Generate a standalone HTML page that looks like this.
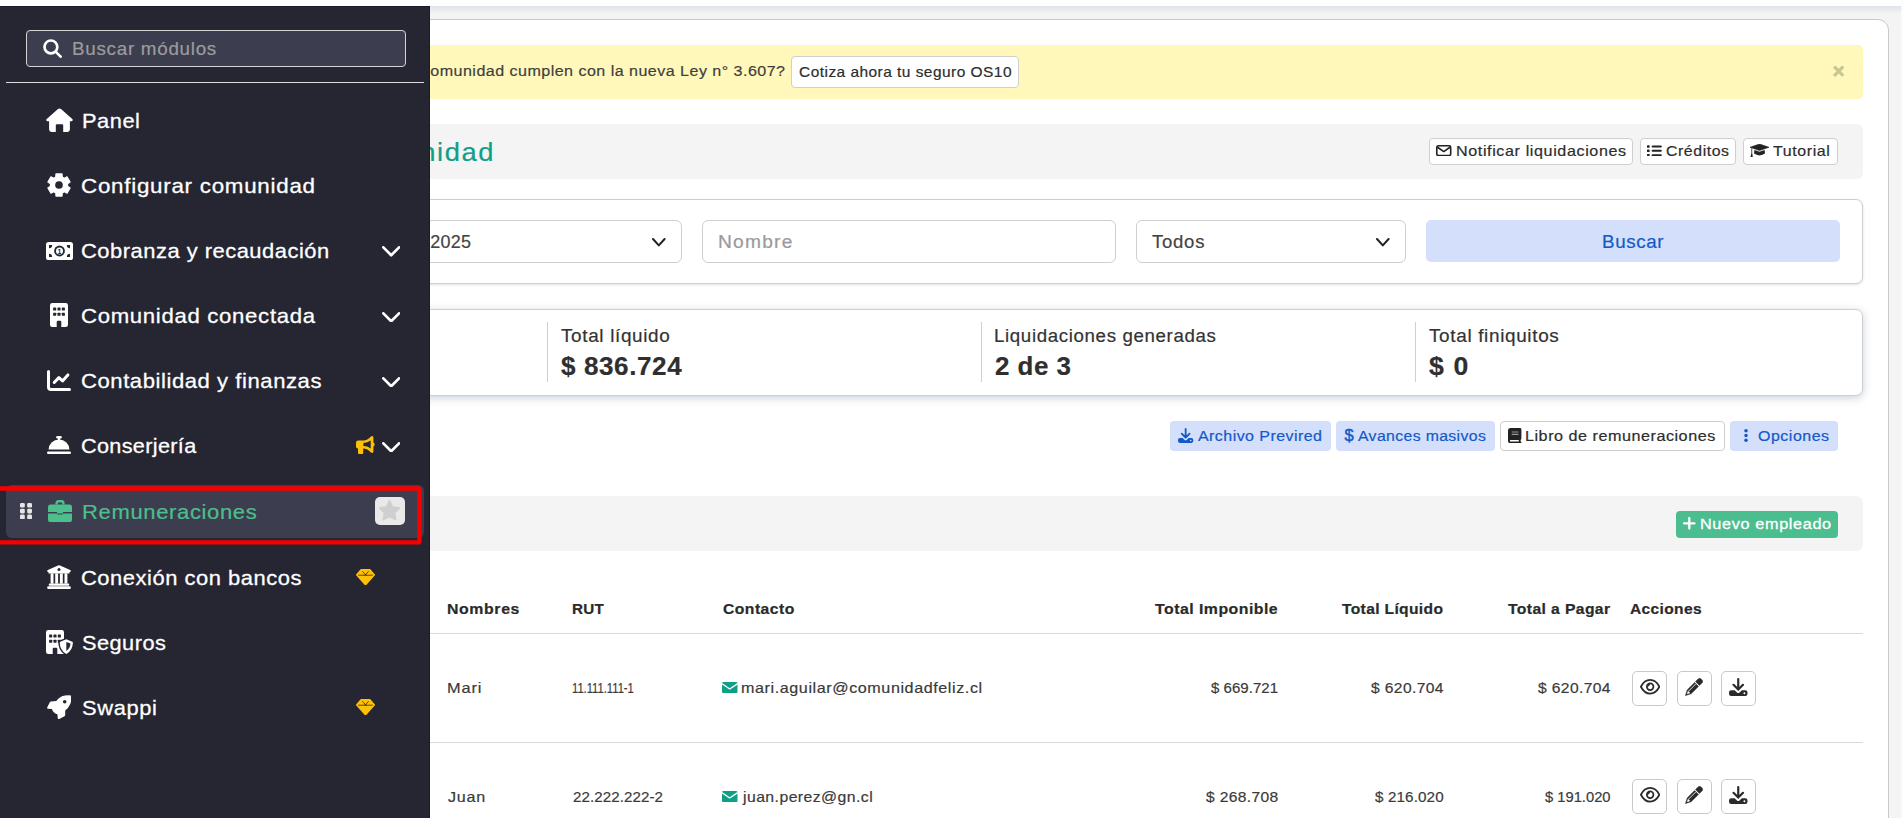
<!DOCTYPE html>
<html lang="es">
<head>
<meta charset="utf-8">
<title>Remuneraciones</title>
<style>
*{box-sizing:border-box;margin:0;padding:0}
html,body{width:1903px;height:818px;overflow:hidden}
body{position:relative;background:#f4f4f4;font-family:"Liberation Sans",sans-serif;color:#333}
.abs,.t,.ic{position:absolute}
.t{white-space:nowrap;line-height:1;-webkit-text-stroke:.2px}
svg{display:block;position:absolute}
/* top */
#topwhite{left:0;top:0;width:1903px;height:6px;background:#fff}
#topshadow{left:430px;top:6px;width:1471px;height:8px;background:linear-gradient(#dfe3e8,#f4f4f4)}
#rightstrip{left:1901px;top:0;width:2px;height:818px;background:#fbfbfb}
#card{left:380px;top:19px;width:1509px;height:820px;background:#fff;border:1px solid #c9c9c9;border-radius:0 11px 0 0}
/* sidebar */
#side{left:0;top:6px;width:430px;height:812px;background:#262633;border-top:1px solid #1b1b27;border-right:1px solid #1b1b27}
</style>
</head>
<body>
<div class="abs" id="topwhite"></div>
<div class="abs" id="topshadow"></div>
<div class="abs" id="rightstrip"></div>
<div class="abs" id="card"></div>
<main class="abs" style="left:0;top:0">
<div class="abs" style="left:380px;top:45px;width:1483px;height:54px;background:#fff8ba;border-radius:5px"></div>
<span class="t" style="left:265.9px;top:63px;font-size:15.2px;color:#3f3f3f;letter-spacing:0.44px;transform:scaleX(1.058);transform-origin:0 50%;">¿Los guardias de tu comunidad cumplen con la nueva Ley n° 3.607?</span>
<div class="abs" style="left:791px;top:56px;width:228px;height:32px;background:#fff;border:1px solid #cfcfcf;border-radius:4px"></div>
<span class="t" style="left:798.8px;top:65px;font-size:14.6px;color:#2d2d2d;letter-spacing:0.44px;transform:scaleX(1.060);transform-origin:0 50%;">Cotiza ahora tu seguro OS10</span>
<span class="t" style="left:1832.8px;top:61px;font-size:20px;font-weight:700;color:#c9c592;-webkit-text-stroke:.8px #c9c592;">×</span>
<div class="abs" style="left:380px;top:124px;width:1483px;height:55px;background:#f4f4f4;border-radius:6px"></div>
<span class="t" style="left:104.3px;top:140px;font-size:25px;color:#0e9f87;letter-spacing:1.41px;transform:scaleX(1.093);transform-origin:0 50%;">Remuneraciones Comunidad</span>
<div class="abs" style="left:1429px;top:138px;width:204px;height:27px;background:#fff;border:1px solid #cfcfcf;border-radius:4px"></div>
<svg style="left:1436.2px;top:145.1px" width="15.5" height="11.3" viewBox="0 0 15.5 11.3"><rect x=".8" y=".8" width="13.9" height="9.700000000000001" rx="1.6" fill="none" stroke="#222" stroke-width="1.6"/><path d="M1.2 2 L7.75 6.554 L14.3 2" fill="none" stroke="#222" stroke-width="1.6" stroke-linejoin="round"/></svg>
<span class="t" style="left:1456.1px;top:144px;font-size:14.8px;color:#2d2d2d;letter-spacing:0.57px;transform:scaleX(1.087);transform-origin:0 50%;">Notificar liquidaciones</span>
<div class="abs" style="left:1640px;top:138px;width:96px;height:27px;background:#fff;border:1px solid #cfcfcf;border-radius:4px"></div>
<svg style="left:1647.3px;top:144.7px" width="14.8" height="11.6" viewBox="0 0 14.8 11.6"><rect x="0" y="0.2" width="2.6" height="2.5" rx=".5" fill="#222"/><rect x="4.6" y="0.45" width="10.2" height="2" rx="1" fill="#222"/><rect x="0" y="4.6" width="2.6" height="2.5" rx=".5" fill="#222"/><rect x="4.6" y="4.85" width="10.2" height="2" rx="1" fill="#222"/><rect x="0" y="9.0" width="2.6" height="2.5" rx=".5" fill="#222"/><rect x="4.6" y="9.25" width="10.2" height="2" rx="1" fill="#222"/></svg>
<span class="t" style="left:1666.1px;top:144px;font-size:14.8px;color:#2d2d2d;letter-spacing:0.55px;transform:scaleX(1.069);transform-origin:0 50%;">Créditos</span>
<div class="abs" style="left:1743px;top:138px;width:95px;height:27px;background:#fff;border:1px solid #cfcfcf;border-radius:4px"></div>
<svg style="left:1749.5px;top:144.2px" width="19" height="13.2" viewBox="0 0 19 13.2"><path d="M9.5 0 L19 3.3 L9.5 6.6 L0 3.3Z" fill="#222" stroke="#222" stroke-width=".6" stroke-linejoin="round"/><path d="M4.4 5.9 L9.5 7.7 L14.6 5.9 L15 9.6 Q12.6 11.4 9.5 11.4 Q6.4 11.4 4 9.6Z" fill="#222"/><path d="M1.4 4 L1.4 9.2 L.4 13 L2.8 13 L2.2 9.2 L2.2 4.4Z" fill="#222"/></svg>
<span class="t" style="left:1773.2px;top:144px;font-size:14.8px;color:#2d2d2d;letter-spacing:0.55px;transform:scaleX(1.079);transform-origin:0 50%;">Tutorial</span>
<div class="abs" style="left:380px;top:199px;width:1483px;height:85px;background:#fff;border:1px solid #cfcfcf;border-radius:7px;box-shadow:0 1px 3px rgba(0,0,0,.12)"></div>
<div class="abs" style="left:380px;top:220px;width:302px;height:43px;background:#fff;border:1px solid #cfcfcf;border-radius:6px"></div>
<span class="t" style="left:330.3px;top:234px;font-size:17.5px;color:#444;letter-spacing:0.31px;transform:scaleX(1.025);transform-origin:0 50%;">Septiembre 2025</span>
<svg style="left:652.3px;top:238.2px" width="13.6" height="8.4" viewBox="0 0 13.6 8.4"><path d="M1.0 1.0 L6.8 7.4 L12.6 1.0" fill="none" stroke="#222" stroke-width="2" stroke-linecap="round" stroke-linejoin="round"/></svg>
<div class="abs" style="left:702px;top:220px;width:414px;height:43px;background:#fff;border:1px solid #cfcfcf;border-radius:6px"></div>
<span class="t" style="left:717.9px;top:234px;font-size:17.5px;color:#9a9a9a;letter-spacing:1.14px;transform:scaleX(1.095);transform-origin:0 50%;">Nombre</span>
<div class="abs" style="left:1136px;top:220px;width:270px;height:43px;background:#fff;border:1px solid #cfcfcf;border-radius:6px"></div>
<span class="t" style="left:1152.2px;top:234px;font-size:17.5px;color:#444;letter-spacing:0.7px;transform:scaleX(1.059);transform-origin:0 50%;">Todos</span>
<svg style="left:1376px;top:238.2px" width="13.6" height="8.4" viewBox="0 0 13.6 8.4"><path d="M1.0 1.0 L6.8 7.4 L12.6 1.0" fill="none" stroke="#222" stroke-width="2" stroke-linecap="round" stroke-linejoin="round"/></svg>
<div class="abs" style="left:1426px;top:220px;width:414px;height:42px;background:#d3dffb;border-radius:5px"></div>
<span class="t" style="left:1602.1px;top:234px;font-size:17.8px;color:#1459c8;letter-spacing:0.59px;transform:scaleX(1.055);transform-origin:0 50%;">Buscar</span>
<div class="abs" style="left:100px;top:309px;width:1763px;height:87px;background:#fff;border:1px solid #cfcfcf;border-radius:7px;box-shadow:0 2px 9px rgba(70,90,120,.28)"></div>
<div class="abs" style="left:547px;top:322px;width:1px;height:60px;background:#cfcfcf"></div>
<div class="abs" style="left:981px;top:322px;width:1px;height:60px;background:#cfcfcf"></div>
<div class="abs" style="left:1415px;top:322px;width:1px;height:60px;background:#cfcfcf"></div>
<span class="t" style="left:561.4px;top:328px;font-size:17.5px;letter-spacing:0.61px;transform:scaleX(1.080);transform-origin:0 50%;">Total líquido</span>
<span class="t" style="left:561.4px;top:354px;font-size:25px;font-weight:700;color:#2f2f2f;letter-spacing:0.57px;transform:scaleX(1.042);transform-origin:0 50%;">$ 836.724</span>
<span class="t" style="left:994.3px;top:328px;font-size:17.5px;letter-spacing:0.6px;transform:scaleX(1.068);transform-origin:0 50%;">Liquidaciones generadas</span>
<span class="t" style="left:995.4px;top:354px;font-size:25px;font-weight:700;color:#2f2f2f;letter-spacing:0.49px;transform:scaleX(1.036);transform-origin:0 50%;">2 de 3</span>
<span class="t" style="left:1429.4px;top:328px;font-size:17.5px;letter-spacing:0.61px;transform:scaleX(1.081);transform-origin:0 50%;">Total finiquitos</span>
<span class="t" style="left:1429.4px;top:354px;font-size:25px;font-weight:700;color:#2f2f2f;letter-spacing:1.1px;transform:scaleX(1.065);transform-origin:0 50%;">$ 0</span>
<div class="abs" style="left:1170px;top:421px;width:161px;height:30px;background:#d3dffb;border-radius:4px"></div>
<svg style="left:1178.4px;top:428px" width="15.3" height="14.886486486486488" viewBox="0 0 18.5 18"><path d="M9.25 1.1 L9.25 11.2 M4.5 6.8 L9.25 11.6 L14 6.8" fill="none" stroke="#1459c8" stroke-width="2.2" stroke-linecap="round" stroke-linejoin="round"/><path d="M2.2 12.2 L5.6 12.2 L8 14.6 Q9.25 15.6 10.5 14.6 L12.9 12.2 L16.3 12.2 Q18.5 12.2 18.5 14.4 L18.5 15.8 Q18.5 18 16.3 18 L2.2 18 Q0 18 0 15.8 L0 14.4 Q0 12.2 2.2 12.2Z" fill="#1459c8"/><circle cx="15.4" cy="15.2" r=".95" fill="#d3dffb"/></svg>
<span class="t" style="left:1198.0px;top:428px;font-size:15.2px;color:#1459c8;letter-spacing:0.41px;transform:scaleX(1.054);transform-origin:0 50%;">Archivo Previred</span>
<div class="abs" style="left:1336px;top:421px;width:159px;height:30px;background:#d3dffb;border-radius:4px"></div>
<span class="t" style="left:1344.6px;top:427px;font-size:16.5px;color:#1459c8;-webkit-text-stroke:.45px;">$</span>
<span class="t" style="left:1358.2px;top:428px;font-size:15.2px;color:#1459c8;letter-spacing:0.35px;transform:scaleX(1.041);transform-origin:0 50%;">Avances masivos</span>
<div class="abs" style="left:1500px;top:421px;width:225px;height:30px;background:#fff;border:1px solid #cfcfcf;border-radius:4px"></div>
<svg style="left:1508.4px;top:427.8px" width="13.4" height="15.3" viewBox="0 0 13.4 15.3"><path d="M2.6 0 L12 0 Q13.4 0 13.4 1.4 L13.4 10.6 Q13.4 11.6 12.6 11.9 L12.6 13.6 Q13.4 13.7 13.4 14.5 Q13.4 15.3 12.5 15.3 L2.6 15.3 Q0 15.3 0 12.7 L0 2.6 Q0 0 2.6 0Z" fill="#222"/><rect x="1.9" y="12" width="9" height="1.6" rx=".6" fill="#fff"/><rect x="3.6" y="3.4" width="7" height="1.1" rx=".5" fill="#999"/><rect x="3.6" y="5.8" width="7" height="1.1" rx=".5" fill="#999"/></svg>
<span class="t" style="left:1525.0px;top:428px;font-size:15.2px;color:#2d2d2d;letter-spacing:0.49px;transform:scaleX(1.064);transform-origin:0 50%;">Libro de remuneraciones</span>
<div class="abs" style="left:1730px;top:421px;width:108px;height:30px;background:#d3dffb;border-radius:4px"></div>
<svg style="left:1743.6px;top:428.9px" width="4" height="13" viewBox="0 0 4 13"><circle cx="2" cy="1.8" r="1.75" fill="#1459c8"/><circle cx="2" cy="6.5" r="1.75" fill="#1459c8"/><circle cx="2" cy="11.2" r="1.75" fill="#1459c8"/></svg>
<span class="t" style="left:1757.5px;top:428px;font-size:15.2px;color:#1459c8;letter-spacing:0.48px;transform:scaleX(1.053);transform-origin:0 50%;">Opciones</span>
<div class="abs" style="left:380px;top:496px;width:1483px;height:55px;background:#f4f4f4;border-radius:7px"></div>
<div class="abs" style="left:1676px;top:511px;width:162px;height:27px;background:#4bbd8e;border-radius:4px"></div>
<svg style="left:1683.2px;top:517.2px" width="12.6" height="12.6" viewBox="0 0 12.6 12.6"><path d="M6.3 1.1 L6.3 11.5 M1.1 6.3 L11.5 6.3" stroke="#fff" stroke-width="2.3" stroke-linecap="round"/></svg>
<span class="t" style="left:1699.5px;top:516px;font-size:15.2px;color:#fff;letter-spacing:0.6px;transform:scaleX(1.069);transform-origin:0 50%;-webkit-text-stroke:.3px #fff;">Nuevo empleado</span>
<span class="t" style="left:446.5px;top:601px;font-size:15px;font-weight:700;color:#2a2a2a;letter-spacing:0.59px;transform:scaleX(1.056);transform-origin:0 50%;">Nombres</span>
<span class="t" style="left:572.0px;top:601px;font-size:15px;font-weight:700;color:#2a2a2a;letter-spacing:0.26px;transform:scaleX(1.017);transform-origin:0 50%;">RUT</span>
<span class="t" style="left:722.7px;top:601px;font-size:15px;font-weight:700;color:#2a2a2a;letter-spacing:0.44px;transform:scaleX(1.047);transform-origin:0 50%;">Contacto</span>
<span class="t" style="left:1155.2px;top:601px;font-size:15px;font-weight:700;color:#2a2a2a;letter-spacing:0.45px;transform:scaleX(1.057);transform-origin:0 50%;">Total Imponible</span>
<span class="t" style="left:1342.3px;top:601px;font-size:15px;font-weight:700;color:#2a2a2a;letter-spacing:0.32px;transform:scaleX(1.042);transform-origin:0 50%;">Total Líquido</span>
<span class="t" style="left:1507.5px;top:601px;font-size:15px;font-weight:700;color:#2a2a2a;letter-spacing:0.37px;transform:scaleX(1.047);transform-origin:0 50%;">Total a Pagar</span>
<span class="t" style="left:1630.0px;top:601px;font-size:15px;font-weight:700;color:#2a2a2a;letter-spacing:0.34px;transform:scaleX(1.036);transform-origin:0 50%;">Acciones</span>
<div class="abs" style="left:380px;top:633px;width:1483px;height:1px;background:#dadada"></div>
<div class="abs" style="left:380px;top:742px;width:1483px;height:1px;background:#dadada"></div>
<span class="t" style="left:446.5px;top:680px;font-size:15px;color:#3a3a3a;letter-spacing:0.81px;transform:scaleX(1.087);transform-origin:0 50%;">Mari</span>
<span class="t" style="left:572.3px;top:680px;font-size:15px;color:#3a3a3a;transform:scaleX(0.746);transform-origin:0 50%;">11.111.111-1</span>
<svg style="left:722.3px;top:682.1px" width="15.5" height="11.2" viewBox="0 0 15.5 11.2"><rect x="0" y="0" width="15.5" height="11.2" rx="1.5" fill="#0e9f87"/><path d="M-.2 1.6 L7.75 6.944 L15.7 1.6" fill="none" stroke="#fff" stroke-width="1.3" stroke-linejoin="round"/></svg>
<span class="t" style="left:741.0px;top:680px;font-size:15px;color:#3a3a3a;letter-spacing:0.54px;transform:scaleX(1.075);transform-origin:0 50%;">mari.aguilar@comunidadfeliz.cl</span>
<span class="t" style="left:1210.8px;top:680px;font-size:15px;color:#3a3a3a;letter-spacing:0.02px;transform:scaleX(1.002);transform-origin:0 50%;">$ 669.721</span>
<span class="t" style="left:1370.9px;top:680px;font-size:15px;color:#3a3a3a;letter-spacing:0.36px;transform:scaleX(1.042);transform-origin:0 50%;">$ 620.704</span>
<span class="t" style="left:1537.6px;top:680px;font-size:15px;color:#3a3a3a;letter-spacing:0.36px;transform:scaleX(1.042);transform-origin:0 50%;">$ 620.704</span>
<div class="abs" style="left:1632px;top:671px;width:35px;height:35px;background:#fff;border:1px solid #c9c9c9;border-radius:5px"></div>
<div class="abs" style="left:1677px;top:671px;width:35px;height:35px;background:#fff;border:1px solid #c9c9c9;border-radius:5px"></div>
<div class="abs" style="left:1721px;top:671px;width:35px;height:35px;background:#fff;border:1px solid #c9c9c9;border-radius:5px"></div>
<svg style="left:1639.9px;top:679.2px" width="20.3" height="15.5" viewBox="0 0 20.3 15.5"><path d="M.9 7.75 Q4.4 .9 10.15 .9 Q15.9 .9 19.4 7.75 Q15.9 14.6 10.15 14.6 Q4.4 14.6 .9 7.75Z" fill="none" stroke="#2b2b2b" stroke-width="1.8" stroke-linejoin="round"/><circle cx="10.15" cy="7.75" r="3.3" fill="none" stroke="#2b2b2b" stroke-width="1.7"/><path d="M10.15 4.6 A3.15 3.15 0 0 0 7 7.75 Q8.6 7.6 9.3 6.7 Q10.1 5.8 10.15 4.6Z" fill="#2b2b2b"/></svg>
<svg style="left:1685.1px;top:678.0px" width="18" height="18" viewBox="0 0 18 18"><g transform="translate(.5 17.5) rotate(-45)"><path d="M0 0 L5.2 -2.75 L15.6 -2.75 L15.6 2.75 L5.2 2.75Z" fill="#2b2b2b" stroke="#2b2b2b" stroke-width=".5" stroke-linejoin="round"/><path d="M16.9 -2.75 L20.6 -2.75 Q22.7 -2.75 22.7 -0.6499999999999999 L22.7 0.6499999999999999 Q22.7 2.75 20.6 2.75 L16.9 2.75Z" fill="#2b2b2b" stroke="#2b2b2b" stroke-width=".5" stroke-linejoin="round"/><path d="M2.6 -.35 L5.1 -1.5 L5.1 1.5 L2.6 .35Z" fill="#fff"/><path d="M5.6 -.9 L15 -.9" stroke="#fff" stroke-width=".8" stroke-linecap="round"/></g></svg>
<svg style="left:1729px;top:678.0px" width="18.5" height="18.0" viewBox="0 0 18.5 18"><path d="M9.25 1.1 L9.25 11.2 M4.5 6.8 L9.25 11.6 L14 6.8" fill="none" stroke="#2b2b2b" stroke-width="2.2" stroke-linecap="round" stroke-linejoin="round"/><path d="M2.2 12.2 L5.6 12.2 L8 14.6 Q9.25 15.6 10.5 14.6 L12.9 12.2 L16.3 12.2 Q18.5 12.2 18.5 14.4 L18.5 15.8 Q18.5 18 16.3 18 L2.2 18 Q0 18 0 15.8 L0 14.4 Q0 12.2 2.2 12.2Z" fill="#2b2b2b"/><circle cx="15.4" cy="15.2" r=".95" fill="#fff"/></svg>
<span class="t" style="left:447.6px;top:789px;font-size:15px;color:#3a3a3a;letter-spacing:0.76px;transform:scaleX(1.071);transform-origin:0 50%;">Juan</span>
<span class="t" style="left:573.0px;top:789px;font-size:15px;color:#3a3a3a;letter-spacing:0.07px;transform:scaleX(1.009);transform-origin:0 50%;">22.222.222-2</span>
<svg style="left:722.3px;top:791.1px" width="15.5" height="11.2" viewBox="0 0 15.5 11.2"><rect x="0" y="0" width="15.5" height="11.2" rx="1.5" fill="#0e9f87"/><path d="M-.2 1.6 L7.75 6.944 L15.7 1.6" fill="none" stroke="#fff" stroke-width="1.3" stroke-linejoin="round"/></svg>
<span class="t" style="left:743.2px;top:789px;font-size:15px;color:#3a3a3a;letter-spacing:0.41px;transform:scaleX(1.053);transform-origin:0 50%;">juan.perez@gn.cl</span>
<span class="t" style="left:1205.7px;top:789px;font-size:15px;color:#3a3a3a;letter-spacing:0.33px;transform:scaleX(1.040);transform-origin:0 50%;">$ 268.708</span>
<span class="t" style="left:1374.8px;top:789px;font-size:15px;color:#3a3a3a;letter-spacing:0.12px;transform:scaleX(1.014);transform-origin:0 50%;">$ 216.020</span>
<span class="t" style="left:1544.6px;top:789px;font-size:15px;color:#3a3a3a;transform:scaleX(0.982);transform-origin:0 50%;">$ 191.020</span>
<div class="abs" style="left:1632px;top:779px;width:35px;height:35px;background:#fff;border:1px solid #c9c9c9;border-radius:5px"></div>
<div class="abs" style="left:1677px;top:779px;width:35px;height:35px;background:#fff;border:1px solid #c9c9c9;border-radius:5px"></div>
<div class="abs" style="left:1721px;top:779px;width:35px;height:35px;background:#fff;border:1px solid #c9c9c9;border-radius:5px"></div>
<svg style="left:1639.9px;top:787.4px" width="20.3" height="15.5" viewBox="0 0 20.3 15.5"><path d="M.9 7.75 Q4.4 .9 10.15 .9 Q15.9 .9 19.4 7.75 Q15.9 14.6 10.15 14.6 Q4.4 14.6 .9 7.75Z" fill="none" stroke="#2b2b2b" stroke-width="1.8" stroke-linejoin="round"/><circle cx="10.15" cy="7.75" r="3.3" fill="none" stroke="#2b2b2b" stroke-width="1.7"/><path d="M10.15 4.6 A3.15 3.15 0 0 0 7 7.75 Q8.6 7.6 9.3 6.7 Q10.1 5.8 10.15 4.6Z" fill="#2b2b2b"/></svg>
<svg style="left:1685.1px;top:786.1999999999999px" width="18" height="18" viewBox="0 0 18 18"><g transform="translate(.5 17.5) rotate(-45)"><path d="M0 0 L5.2 -2.75 L15.6 -2.75 L15.6 2.75 L5.2 2.75Z" fill="#2b2b2b" stroke="#2b2b2b" stroke-width=".5" stroke-linejoin="round"/><path d="M16.9 -2.75 L20.6 -2.75 Q22.7 -2.75 22.7 -0.6499999999999999 L22.7 0.6499999999999999 Q22.7 2.75 20.6 2.75 L16.9 2.75Z" fill="#2b2b2b" stroke="#2b2b2b" stroke-width=".5" stroke-linejoin="round"/><path d="M2.6 -.35 L5.1 -1.5 L5.1 1.5 L2.6 .35Z" fill="#fff"/><path d="M5.6 -.9 L15 -.9" stroke="#fff" stroke-width=".8" stroke-linecap="round"/></g></svg>
<svg style="left:1729px;top:786.1999999999999px" width="18.5" height="18.0" viewBox="0 0 18.5 18"><path d="M9.25 1.1 L9.25 11.2 M4.5 6.8 L9.25 11.6 L14 6.8" fill="none" stroke="#2b2b2b" stroke-width="2.2" stroke-linecap="round" stroke-linejoin="round"/><path d="M2.2 12.2 L5.6 12.2 L8 14.6 Q9.25 15.6 10.5 14.6 L12.9 12.2 L16.3 12.2 Q18.5 12.2 18.5 14.4 L18.5 15.8 Q18.5 18 16.3 18 L2.2 18 Q0 18 0 15.8 L0 14.4 Q0 12.2 2.2 12.2Z" fill="#2b2b2b"/><circle cx="15.4" cy="15.2" r=".95" fill="#fff"/></svg>
</main>
<div class="abs" id="side"></div>
<nav class="abs" style="left:0;top:0">
<div class="abs" style="left:26px;top:30px;width:380px;height:37px;background:#3d3d50;border:1px solid #d4d4d4;border-radius:4px"></div>
<svg style="left:43.4px;top:38.8px" width="19" height="19" viewBox="0 0 19 19"><circle cx="7.9" cy="7.9" r="6.4" fill="none" stroke="#fff" stroke-width="2.7"/><path d="M12.6 12.6 L17.6 17.6" stroke="#fff" stroke-width="2.7" stroke-linecap="round"/></svg>
<span class="t" style="left:72.2px;top:41px;font-size:17.5px;color:#9c9c9c;letter-spacing:0.69px;transform:scaleX(1.073);transform-origin:0 50%;">Buscar módulos</span>
<div class="abs" style="left:6px;top:82px;width:418px;height:1px;background:#dcdcdc"></div>
<span class="t" style="left:82.1px;top:110px;font-size:21px;font-weight:500;color:#fff;letter-spacing:0.51px;transform:scaleX(1.039);transform-origin:0 50%;-webkit-text-stroke:.28px #fff;">Panel</span>
<span class="t" style="left:80.9px;top:175px;font-size:21px;font-weight:500;color:#fff;letter-spacing:0.7px;transform:scaleX(1.064);transform-origin:0 50%;-webkit-text-stroke:.28px #fff;">Configurar comunidad</span>
<span class="t" style="left:81.0px;top:240px;font-size:21px;font-weight:500;color:#fff;letter-spacing:0.48px;transform:scaleX(1.044);transform-origin:0 50%;-webkit-text-stroke:.28px #fff;">Cobranza y recaudación</span>
<span class="t" style="left:80.9px;top:305px;font-size:21px;font-weight:500;color:#fff;letter-spacing:0.64px;transform:scaleX(1.056);transform-origin:0 50%;-webkit-text-stroke:.28px #fff;">Comunidad conectada</span>
<span class="t" style="left:80.9px;top:370px;font-size:21px;font-weight:500;color:#fff;letter-spacing:0.52px;transform:scaleX(1.052);transform-origin:0 50%;-webkit-text-stroke:.28px #fff;">Contabilidad y finanzas</span>
<span class="t" style="left:81.0px;top:435px;font-size:21px;font-weight:500;color:#fff;letter-spacing:0.33px;transform:scaleX(1.030);transform-origin:0 50%;-webkit-text-stroke:.28px #fff;">Conserjería</span>
<div class="abs" style="left:6px;top:485px;width:418px;height:53px;background:#3d3d50;border-radius:6px"></div>
<span class="t" style="left:82.4px;top:501px;font-size:21px;color:#4cbf8c;letter-spacing:0.6px;transform:scaleX(1.049);transform-origin:0 50%;">Remuneraciones</span>
<span class="t" style="left:81.0px;top:567px;font-size:21px;font-weight:500;color:#fff;letter-spacing:0.5px;transform:scaleX(1.045);transform-origin:0 50%;-webkit-text-stroke:.28px #fff;">Conexión con bancos</span>
<span class="t" style="left:82.3px;top:632px;font-size:21px;font-weight:500;color:#fff;letter-spacing:0.46px;transform:scaleX(1.035);transform-origin:0 50%;-webkit-text-stroke:.28px #fff;">Seguros</span>
<span class="t" style="left:82.0px;top:697px;font-size:21px;font-weight:500;color:#fff;letter-spacing:0.59px;transform:scaleX(1.043);transform-origin:0 50%;-webkit-text-stroke:.28px #fff;">Swappi</span>
<svg style="left:45.9px;top:108.3px" width="27" height="24" viewBox="0 0 27 24"><path fill="#fff" d="M13.5 .4 Q14.3 .4 15 1 L26.3 10.9 Q27.2 11.9 26.3 12.8 Q25.9 13.3 25 13.3 L23.9 13.3 L23.9 21.6 Q23.9 24 21.5 24 L17.2 24 L17.2 17.2 Q17.2 16.2 16.2 16.2 L10.8 16.2 Q9.8 16.2 9.8 17.2 L9.8 24 L5.5 24 Q3.1 24 3.1 21.6 L3.1 13.3 L2 13.3 Q1.1 13.3 .7 12.8 Q-.2 11.9 .7 10.9 L12 1 Q12.7 .4 13.5 .4Z"/></svg>
<svg style="left:47.4px;top:173.1px" width="24" height="24" viewBox="0 0 24 24"><path fill="#fff" fill-rule="evenodd" stroke="#fff" stroke-width="1.1" stroke-linejoin="round" d="M8.77 3.92 L8.93 0.92 L15.07 0.92 L15.23 3.92 L17.38 5.17 L20.06 3.80 L23.13 9.11 L20.61 10.75 L20.61 13.25 L23.13 14.89 L20.06 20.20 L17.38 18.83 L15.23 20.08 L15.07 23.08 L8.93 23.08 L8.77 20.08 L6.62 18.83 L3.94 20.20 L0.87 14.89 L3.39 13.25 L3.39 10.75 L0.87 9.11 L3.94 3.80 L6.62 5.17Z M8.2 12 a3.8 3.8 0 1 0 7.6 0 a3.8 3.8 0 1 0 -7.6 0Z"/><circle cx="12" cy="12" r="3.8" fill="#262633"/></svg>
<svg style="left:45.9px;top:241.5px" width="27" height="18" viewBox="0 0 27 18"><rect x="0" y="0" width="27" height="18" rx="2.6" fill="#fff"/><circle cx="13.5" cy="9" r="5.4" fill="#262633"/><circle cx="13.5" cy="9" r="3.5" fill="#fff"/><text x="13.45" y="11.5" font-family="Liberation Sans,sans-serif" font-size="7" font-weight="700" text-anchor="middle" fill="#262633">1</text><path d="M3 6.2 A3.2 3.2 0 0 0 6.2 3 L6.2 3 L3 3Z" fill="#262633"/><path d="M24 6.2 A3.2 3.2 0 0 1 20.8 3 L20.8 3 L24 3Z" fill="#262633"/><path d="M3 11.8 A3.2 3.2 0 0 1 6.2 15 L6.2 15 L3 15Z" fill="#262633"/><path d="M24 11.8 A3.2 3.2 0 0 0 20.8 15 L20.8 15 L24 15Z" fill="#262633"/></svg>
<svg style="left:50px;top:303.2px" width="18" height="24" viewBox="0 0 18 24"><rect x="0" y="0" width="18" height="24" rx="2.3" fill="#fff"/><rect x="3.1" y="4.4" width="3.1" height="3.1" rx=".6" fill="#262633"/><rect x="7.45" y="4.4" width="3.1" height="3.1" rx=".6" fill="#262633"/><rect x="11.8" y="4.4" width="3.1" height="3.1" rx=".6" fill="#262633"/><rect x="3.1" y="9.7" width="3.1" height="3.1" rx=".6" fill="#262633"/><rect x="7.45" y="9.7" width="3.1" height="3.1" rx=".6" fill="#262633"/><rect x="11.8" y="9.7" width="3.1" height="3.1" rx=".6" fill="#262633"/><path d="M6.7 24 L6.7 18.9 Q6.7 17.8 7.8 17.8 L10.2 17.8 Q11.3 17.8 11.3 18.9 L11.3 24Z" fill="#262633"/></svg>
<svg style="left:47px;top:369.8px" width="24" height="21" viewBox="0 0 24 21"><path d="M1.5 1.5 L1.5 17 Q1.5 19.5 4 19.5 L22.5 19.5" fill="none" stroke="#fff" stroke-width="3" stroke-linecap="round" stroke-linejoin="round"/><path d="M7.2 12.5 L11.9 7.6 L15.5 10.9 L20.9 4.9" fill="none" stroke="#fff" stroke-width="3" stroke-linecap="round" stroke-linejoin="round"/></svg>
<svg style="left:47px;top:436.2px" width="24" height="18" viewBox="0 0 24 18"><rect x="9.2" y="0" width="5.6" height="2.6" rx="1.3" fill="#fff"/><rect x="10.9" y="1.5" width="2.2" height="3" fill="#fff"/><path d="M1.6 13.6 A10.4 10 0 0 1 22.4 13.6Z" fill="#fff"/><rect x="0" y="15.4" width="24" height="2.6" rx="1.3" fill="#fff"/></svg>
<svg style="left:20.2px;top:503.2px" width="12" height="16.2" viewBox="0 0 12 16.2"><rect x="0" y="0" width="4.8" height="4.6" rx="1.3" fill="#e6e6e6"/><rect x="7.2" y="0" width="4.8" height="4.6" rx="1.3" fill="#e6e6e6"/><rect x="0" y="5.8" width="4.8" height="4.6" rx="1.3" fill="#e6e6e6"/><rect x="7.2" y="5.8" width="4.8" height="4.6" rx="1.3" fill="#e6e6e6"/><rect x="0" y="11.6" width="4.8" height="4.6" rx="1.3" fill="#e6e6e6"/><rect x="7.2" y="11.6" width="4.8" height="4.6" rx="1.3" fill="#e6e6e6"/></svg>
<svg style="left:48px;top:499.7px" width="24" height="22" viewBox="0 0 24 22"><path d="M8.6 4.6 L8.6 3.2 Q8.6 1.3 10.5 1.3 L13.5 1.3 Q15.4 1.3 15.4 3.2 L15.4 4.6" fill="none" stroke="#4cbf8c" stroke-width="2.4"/><rect x="0" y="4.4" width="24" height="17.6" rx="2.6" fill="#4cbf8c"/><path d="M0 12 L9 12 L9 13.4 Q9 14.4 10 14.4 L14 14.4 Q15 14.4 15 13.4 L15 12 L24 12 L24 13.6 L0 13.6Z" fill="#3d3d50"/></svg>
<svg style="left:47.1px;top:565.3px" width="24" height="24" viewBox="0 0 24 24"><path d="M12 .3 Q12.5 .3 13 .6 L23.2 5 Q24 5.4 23.8 6.2 Q23.6 7 22.8 7 L22.5 7 L22.5 8.4 L1.5 8.4 L1.5 7 L1.2 7 Q.4 7 .2 6.2 Q0 5.4 .8 5 L11 .6 Q11.5 .3 12 .3Z" fill="#fff"/><circle cx="12" cy="4.6" r="1.5" fill="#262633"/><rect x="3.6" y="8.4" width="2.9" height="10.2" fill="#fff"/><rect x="8.2" y="8.4" width="2.9" height="10.2" fill="#fff"/><rect x="12.9" y="8.4" width="2.9" height="10.2" fill="#fff"/><rect x="17.5" y="8.4" width="2.9" height="10.2" fill="#fff"/><rect x="1.8" y="18.4" width="20.4" height="2.4" rx=".8" fill="#fff"/><rect x=".2" y="21.2" width="23.6" height="2.8" rx="1.2" fill="#fff"/></svg>
<svg style="left:45.9px;top:630.3px" width="27" height="24" viewBox="0 0 27 24"><path d="M2.3 0 L15.7 0 Q18 0 18 2.3 L18 24 L11.3 24 L11.3 18.9 Q11.3 17.8 10.2 17.8 L7.8 17.8 Q6.7 17.8 6.7 18.9 L6.7 24 L2.3 24 Q0 24 0 21.7 L0 2.3 Q0 0 2.3 0Z" fill="#fff"/><rect x="3.1" y="4.4" width="3.1" height="3.1" rx=".6" fill="#262633"/><rect x="7.45" y="4.4" width="3.1" height="3.1" rx=".6" fill="#262633"/><rect x="11.8" y="4.4" width="3.1" height="3.1" rx=".6" fill="#262633"/><rect x="3.1" y="9.7" width="3.1" height="3.1" rx=".6" fill="#262633"/><rect x="7.45" y="9.7" width="3.1" height="3.1" rx=".6" fill="#262633"/><rect x="11.8" y="9.7" width="3.1" height="3.1" rx=".6" fill="#262633"/><path d="M20.3 7.7 L28.4 11 Q28.6 21 20.3 25.6 Q12 21 12.2 11Z" fill="#262633"/><path d="M20.3 9.3 L26.3 11.8 Q26.9 12.1 26.9 12.8 Q26.7 20 20.8 23.7 Q20.3 24 19.8 23.7 Q13.9 20 13.7 12.8 Q13.7 12.1 14.3 11.8Z" fill="#fff"/><path d="M20.3 11.9 L24.5 13.6 Q24.2 18.4 20.3 21.1Z" fill="#262633"/></svg>
<svg style="left:47px;top:694.8px" width="24.4" height="24.4" viewBox="0 0 24.4 24.4"><path d="M24 .4 Q24.8 5 23.4 8.8 Q21.6 13 18.2 15.6 L18.2 20 Q18.2 20.8 17.5 21.2 L12.2 24 Q11 24.4 10.8 23.2 L10.4 19.2 Q8.6 19 7.4 17.8 L6.4 16.8 Q5.2 15.6 5 14 L1 13.8 Q-.3 13.6 .2 12.4 L2.8 7.2 Q3.2 6.4 4 6.4 L9.2 6 Q11.6 2.8 15 1.3 Q19 -.3 24 .4Z" fill="#fff"/><circle cx="17.7" cy="6.7" r="1.8" fill="#262633"/></svg>
<svg style="left:382px;top:246.4px" width="18.4" height="10.6" viewBox="0 0 18.4 10.6"><path d="M1.35 1.35 L9.2 9.25 L17.049999999999997 1.35" fill="none" stroke="#fff" stroke-width="2.7" stroke-linecap="round" stroke-linejoin="round"/></svg>
<svg style="left:382px;top:311.6px" width="18.4" height="10.6" viewBox="0 0 18.4 10.6"><path d="M1.35 1.35 L9.2 9.25 L17.049999999999997 1.35" fill="none" stroke="#fff" stroke-width="2.7" stroke-linecap="round" stroke-linejoin="round"/></svg>
<svg style="left:382px;top:376.6px" width="18.4" height="10.6" viewBox="0 0 18.4 10.6"><path d="M1.35 1.35 L9.2 9.25 L17.049999999999997 1.35" fill="none" stroke="#fff" stroke-width="2.7" stroke-linecap="round" stroke-linejoin="round"/></svg>
<svg style="left:382px;top:441.5px" width="18.4" height="10.6" viewBox="0 0 18.4 10.6"><path d="M1.35 1.35 L9.2 9.25 L17.049999999999997 1.35" fill="none" stroke="#fff" stroke-width="2.7" stroke-linecap="round" stroke-linejoin="round"/></svg>
<svg style="left:356px;top:436.1px" width="19" height="18.2" viewBox="0 0 19 18.2"><path d="M16 0 Q17.4 0 17.4 1.4 L17.4 6.6 Q18.6 7.2 18.6 8.5 Q18.6 9.8 17.4 10.4 L17.4 15.6 Q17.4 17 16 17 Q15.4 17 15 16.6 L13.4 15 Q11.2 12.8 8 12.6 L7.2 12.6 L7.2 16.8 Q7.2 18.1 5.9 18.1 L3.3 18.1 Q2 18.1 2 16.8 L2 12.6 Q0 12.4 0 10.4 L0 6.6 Q0 4.4 2.2 4.4 L8 4.4 Q11.2 4.2 13.4 2 L15 .4 Q15.4 0 16 0Z" fill="#ffc107"/><path d="M14.7 4.6 Q11.6 7 7.4 7 L7.4 10 Q11.6 10 14.7 12.4Z" fill="#262633"/></svg>
<div class="abs" style="left:375px;top:497px;width:30px;height:28px;background:#e9e9e9;border-radius:5px"></div>
<svg style="left:379.2px;top:500px" width="21" height="21" viewBox="0 0 21 21"><path d="M10.50 1.00 L13.44 7.15 L20.20 8.05 L15.26 12.75 L16.50 19.45 L10.50 16.20 L4.50 19.45 L5.74 12.75 L0.80 8.05 L7.56 7.15Z" fill="#cfcfcf" stroke="#cfcfcf" stroke-width="2" stroke-linejoin="round"/></svg>
<svg style="left:355.7px;top:568.7px" width="19" height="16.5" viewBox="0 0 19 16.5"><path d="M4.6 .3 Q4.9 0 5.4 0 L13.6 0 Q14.1 0 14.4 .3 L18.7 5.2 Q19.2 5.9 18.7 6.5 L10.2 16.1 Q9.5 16.8 8.8 16.1 L.3 6.5 Q-.2 5.9 .3 5.2Z" fill="#ffc107"/><path d="M2.6 6.2 L16.4 6.2 M6.6 2.5 L9.5 5.7 L12.4 2.5" fill="none" stroke="#20202c" stroke-width=".75" stroke-linecap="round"/><path d="M7.8 6.2 Q9.5 4.6 11.2 6.2Z" fill="#20202c"/></svg>
<svg style="left:355.7px;top:698.5px" width="19" height="16.5" viewBox="0 0 19 16.5"><path d="M4.6 .3 Q4.9 0 5.4 0 L13.6 0 Q14.1 0 14.4 .3 L18.7 5.2 Q19.2 5.9 18.7 6.5 L10.2 16.1 Q9.5 16.8 8.8 16.1 L.3 6.5 Q-.2 5.9 .3 5.2Z" fill="#ffc107"/><path d="M2.6 6.2 L16.4 6.2 M6.6 2.5 L9.5 5.7 L12.4 2.5" fill="none" stroke="#20202c" stroke-width=".75" stroke-linecap="round"/><path d="M7.8 6.2 Q9.5 4.6 11.2 6.2Z" fill="#20202c"/></svg>
<svg style="left:0;top:480px" width="430" height="70" viewBox="0 480 430 70"><rect x="-4" y="488.5" width="423.4" height="53.9" rx="1.2" fill="none" stroke="#f80000" stroke-width="4.4"/></svg>
</nav>
</body>
</html>
